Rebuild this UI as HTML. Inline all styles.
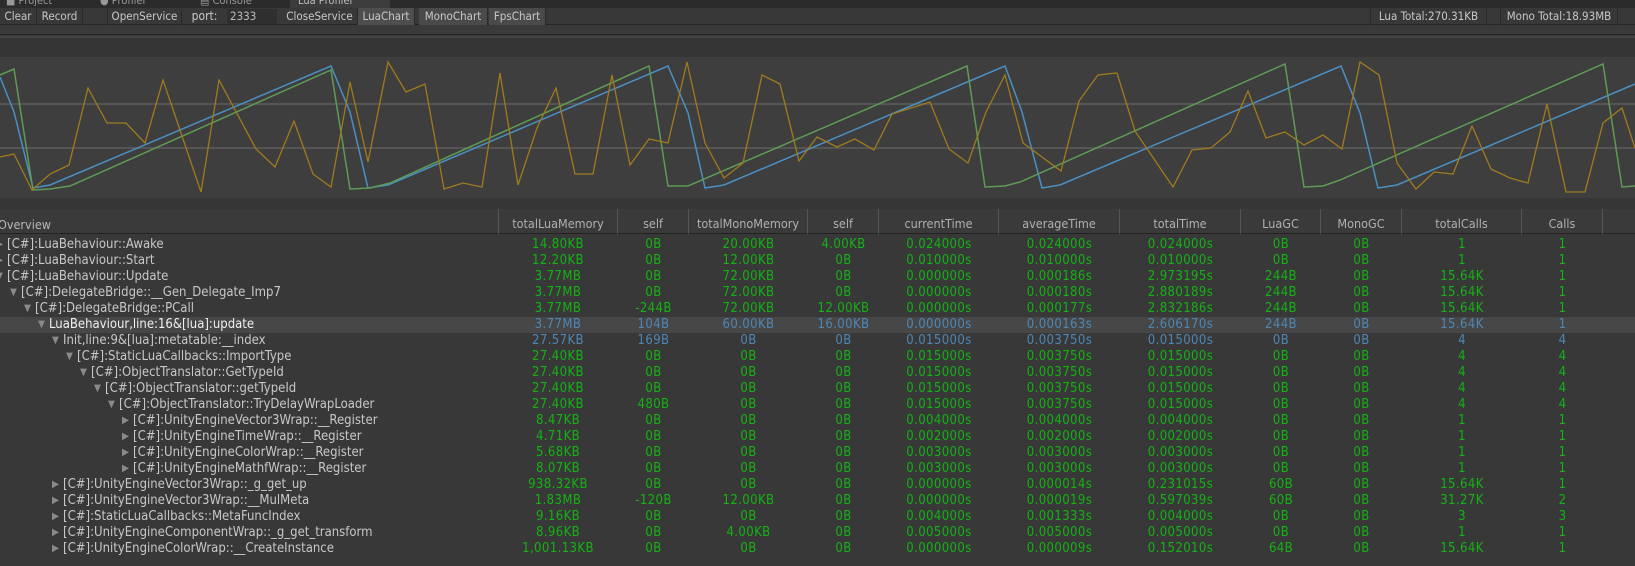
<!DOCTYPE html>
<html><head><meta charset="utf-8"><style>
*{margin:0;padding:0;box-sizing:border-box}
body{width:1635px;height:566px;background:#383838;overflow:hidden;position:relative;font-family:"DejaVu Sans Condensed","Liberation Sans",sans-serif;font-size:11px;color:#c4c4c4}
.abs{position:absolute}
.btn{position:absolute;top:8px;height:17px;line-height:17px;font-size:11.5px;color:#c8c8c8;text-align:center;border-right:1px solid #2a2a2a}
.row{position:absolute;left:0;width:1635px;height:16px;line-height:16px;font-size:13px}
.row .n{position:absolute;white-space:nowrap;color:#c8c8c8}
.row .a{position:absolute;color:#8a8a8a;font-size:10px}
.c{position:absolute;top:0;display:flex}
.c span{display:block;text-align:center;color:#14b214;letter-spacing:0.4px}
.sel{background:#474747}
.sel .c span,.blue .c span{color:#4f86b4}
.sel .n{color:#f0f0f0}
.h{position:absolute;top:209px;height:25px;line-height:14px;padding-top:8px;text-align:center;color:#b0b0b0;border-right:1px solid #555;font-size:12.5px}
</style></head><body>
<div class="abs" style="left:0;top:0;width:1635px;height:8px;background:#2b2b2b"></div>
<div class="abs" style="top:-6px;left:6px;font-size:11px;color:#999">■ Project</div>
<div class="abs" style="top:-6px;left:100px;font-size:11px;color:#999">● Profiler</div>
<div class="abs" style="top:-6px;left:200px;font-size:11px;color:#999">▤ Console</div>
<div class="abs" style="top:0;left:290px;width:100px;height:8px;background:#3c3c3c"></div>
<div class="abs" style="top:-6px;left:298px;font-size:11px;color:#bbb">Lua Profiler</div>
<div class="abs" style="left:0;top:8px;width:1635px;height:17px;background:#383838;border-bottom:1px solid #252525"></div>
<div class="btn" style="left:0;width:37px">Clear</div>
<div class="btn" style="left:37px;width:46px">Record</div>
<div class="btn" style="left:83px;width:25px"></div>
<div class="btn" style="left:108px;width:74px">OpenService</div>
<div class="btn" style="left:182px;width:45px;border:none;font-size:12px">port:</div>
<div class="abs" style="left:227px;top:9px;width:50px;height:15px;background:#2f2f2f;color:#bbb;font-size:11.5px;line-height:15px;padding-left:3px">2333</div>
<div class="btn" style="left:282px;width:76px">CloseService</div>
<div class="btn" style="left:358px;width:57px;background:#4e4e4e">LuaChart</div>
<div class="btn" style="left:419px;width:69px;background:#4a4a4a">MonoChart</div>
<div class="btn" style="left:489px;width:57px;background:#4a4a4a">FpsChart</div>
<div class="btn" style="left:1370px;width:117px;border-left:1px solid #2a2a2a">Lua Total:270.31KB</div>
<div class="btn" style="left:1500px;width:118px;border-left:1px solid #2a2a2a">Mono Total:18.93MB</div>
<div class="abs" style="left:0;top:25px;width:1635px;height:10px;background:#3a3a3a;border-bottom:1px solid #232323"></div>
<div class="abs" style="left:0;top:36px;width:1635px;height:21px;background:#353535;border-top:2px solid #444"></div>
<div class="abs" style="left:0;top:57px;width:1635px;height:141px;background:#3e3e3e"></div>
<div class="abs" style="left:0;top:103px;width:1635px;height:2px;background:#555"></div>
<div class="abs" style="left:0;top:147px;width:1635px;height:2px;background:#555"></div>
<div class="abs" style="left:0;top:198px;width:1635px;height:11px;background:#363636"></div>
<svg class="abs" style="left:0;top:0" width="1635" height="200">
<polyline fill="none" stroke="#4b8fc2" stroke-width="1.5" points="0,77 14,112 33,188 50,185 331,66 350,112 368,188 388,185 668,66 688,113 705,188 724,185 1005,66 1022,112 1042,188 1060,185 1341,66 1360,113 1378,188 1397,185 1635,84"/>
<polyline fill="none" stroke="#5f9a56" stroke-width="1.5" points="0,75 14,69 33,190 50,189 70,186 331,70 350,189 370,188 390,183 649,66 668,186 688,186 967,66 985,187 1005,186 1020,182 1285,64 1304,187 1323,186 1340,180 1603,64 1622,187 1635,186"/>
<polyline fill="none" stroke="#a07b1e" stroke-width="1.3" points="0,157 14,154 32,190 50,174 69,165 88,88 107,123 126,123 145,143 163,80 201,192 219,80 256,149 275,167 294,121 313,174 331,187 350,82 368,162 388,62 406,92 425,84 444,189 463,183 482,187 500,73 518,185 537,128 556,88 575,174 593,174 612,75 630,165 649,139 668,143 687,62 705,143 724,178 743,163 762,75 780,84 799,161 817,137 837,147 855,139 874,150 892,114 930,102 949,149 968,163 986,112 1005,75 1023,143 1061,171 1079,101 1098,75 1117,73 1135,131 1173,187 1192,150 1211,148 1230,132 1248,91 1266,138 1285,132 1304,145 1323,135 1342,149 1360,62 1379,75 1397,163 1416,189 1434,172 1453,174 1472,126 1491,169 1510,178 1528,183 1547,104 1566,192 1585,192 1603,123 1622,108 1635,148"/>
</svg>
<div class="abs" style="left:0;top:209px;width:1635px;height:25px;background:#3a3a3a;border-bottom:1px solid #222"></div>
<div class="abs" style="left:-2px;top:217px;color:#b8b8b8;font-size:12.5px">Overview</div>
<div class="h" style="left:498px;width:120px;border-left:1px solid #555">totalLuaMemory</div>
<div class="h" style="left:618px;width:71px">self</div>
<div class="h" style="left:689px;width:119px">totalMonoMemory</div>
<div class="h" style="left:808px;width:71px">self</div>
<div class="h" style="left:879px;width:120px">currentTime</div>
<div class="h" style="left:999px;width:121px">averageTime</div>
<div class="h" style="left:1120px;width:121px">totalTime</div>
<div class="h" style="left:1241px;width:80px">LuaGC</div>
<div class="h" style="left:1321px;width:81px">MonoGC</div>
<div class="h" style="left:1402px;width:120px">totalCalls</div>
<div class="h" style="left:1522px;width:81px">Calls</div>
<div id="rows"></div>
<script>
var W=[120,71,119,71,120,121,121,80,81,120,81];
var R=[
[0,0,"[C#]:LuaBehaviour::Awake","14.80KB 0B 20.00KB 4.00KB 0.024000s 0.024000s 0.024000s 0B 0B 1 1"],
[0,0,"[C#]:LuaBehaviour::Start","12.20KB 0B 12.00KB 0B 0.010000s 0.010000s 0.010000s 0B 0B 1 1"],
[0,1,"[C#]:LuaBehaviour::Update","3.77MB 0B 72.00KB 0B 0.000000s 0.000186s 2.973195s 244B 0B 15.64K 1"],
[1,1,"[C#]:DelegateBridge::__Gen_Delegate_Imp7","3.77MB 0B 72.00KB 0B 0.000000s 0.000180s 2.880189s 244B 0B 15.64K 1"],
[2,1,"[C#]:DelegateBridge::PCall","3.77MB -244B 72.00KB 12.00KB 0.000000s 0.000177s 2.832186s 244B 0B 15.64K 1"],
[3,1,"LuaBehaviour,line:16&[lua]:update","3.77MB 104B 60.00KB 16.00KB 0.000000s 0.000163s 2.606170s 244B 0B 15.64K 1","sel"],
[4,1,"Init,line:9&[lua]:metatable:__index","27.57KB 169B 0B 0B 0.015000s 0.003750s 0.015000s 0B 0B 4 4","blue"],
[5,1,"[C#]:StaticLuaCallbacks::ImportType","27.40KB 0B 0B 0B 0.015000s 0.003750s 0.015000s 0B 0B 4 4"],
[6,1,"[C#]:ObjectTranslator::GetTypeId","27.40KB 0B 0B 0B 0.015000s 0.003750s 0.015000s 0B 0B 4 4"],
[7,1,"[C#]:ObjectTranslator::getTypeId","27.40KB 0B 0B 0B 0.015000s 0.003750s 0.015000s 0B 0B 4 4"],
[8,1,"[C#]:ObjectTranslator::TryDelayWrapLoader","27.40KB 480B 0B 0B 0.015000s 0.003750s 0.015000s 0B 0B 4 4"],
[9,0,"[C#]:UnityEngineVector3Wrap::__Register","8.47KB 0B 0B 0B 0.004000s 0.004000s 0.004000s 0B 0B 1 1"],
[9,0,"[C#]:UnityEngineTimeWrap::__Register","4.71KB 0B 0B 0B 0.002000s 0.002000s 0.002000s 0B 0B 1 1"],
[9,0,"[C#]:UnityEngineColorWrap::__Register","5.68KB 0B 0B 0B 0.003000s 0.003000s 0.003000s 0B 0B 1 1"],
[9,0,"[C#]:UnityEngineMathfWrap::__Register","8.07KB 0B 0B 0B 0.003000s 0.003000s 0.003000s 0B 0B 1 1"],
[4,0,"[C#]:UnityEngineVector3Wrap::_g_get_up","938.32KB 0B 0B 0B 0.000000s 0.000014s 0.231015s 60B 0B 15.64K 1"],
[4,0,"[C#]:UnityEngineVector3Wrap::__MulMeta","1.83MB -120B 12.00KB 0B 0.000000s 0.000019s 0.597039s 60B 0B 31.27K 2"],
[4,0,"[C#]:StaticLuaCallbacks::MetaFuncIndex","9.16KB 0B 0B 0B 0.004000s 0.001333s 0.004000s 0B 0B 3 3"],
[4,0,"[C#]:UnityEngineComponentWrap::_g_get_transform","8.96KB 0B 4.00KB 0B 0.005000s 0.005000s 0.005000s 0B 0B 1 1"],
[4,0,"[C#]:UnityEngineColorWrap::__CreateInstance","1,001.13KB 0B 0B 0B 0.000000s 0.000009s 0.152010s 64B 0B 15.64K 1"]];
var h="";
R.forEach(function(r,i){
 var ax=-4+14*r[0];
 h+='<div class="row '+(r[4]||"")+'" style="top:'+(237+16*i)+'px">';
 h+='<span class="a" style="left:'+ax+'px">'+(r[1]?"▼":"▶")+'</span>';
 h+='<span class="n" style="left:'+(ax+11)+'px">'+r[2]+'</span><div class="c" style="left:498px">';
 r[3].split(" ").forEach(function(v,j){h+='<span style="width:'+W[j]+'px">'+v+'</span>';});
 h+='</div></div>';
});
document.getElementById("rows").innerHTML=h;
</script>
</body></html>
